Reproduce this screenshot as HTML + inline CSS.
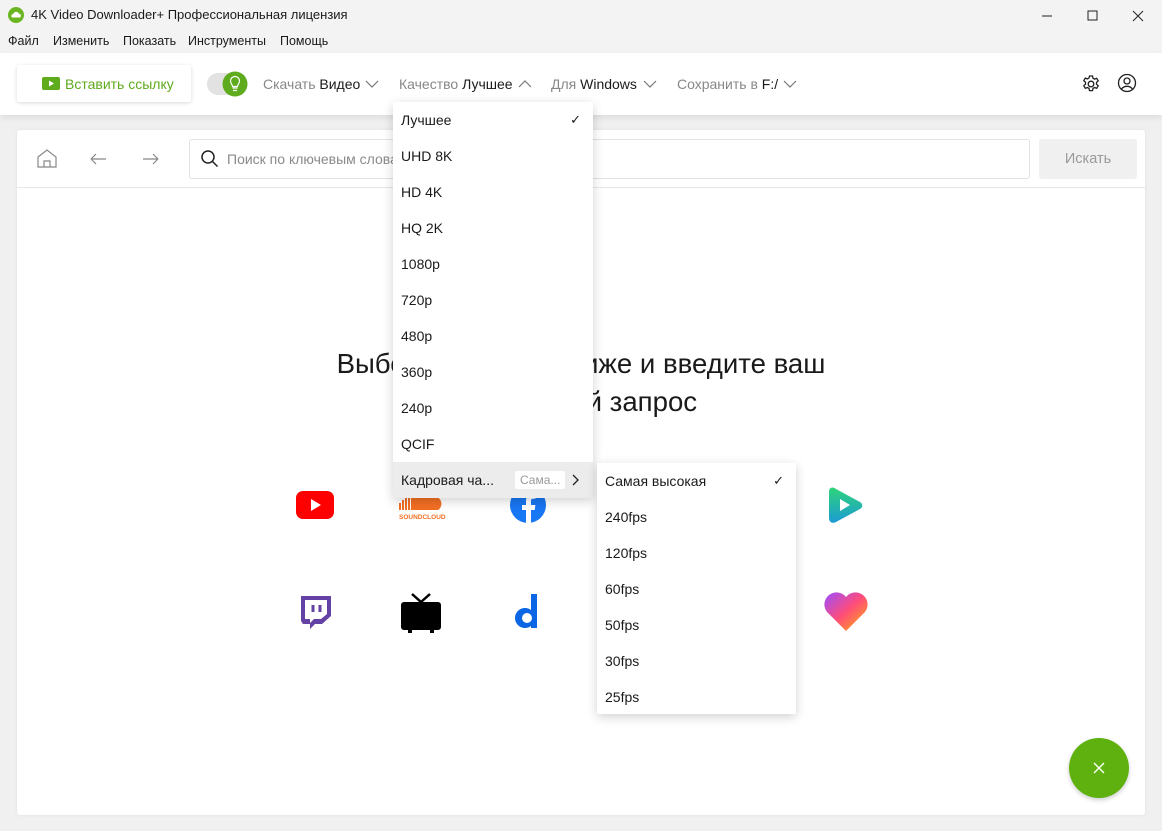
<!DOCTYPE html>
<html><head><meta charset="utf-8"><style>
*{margin:0;padding:0;box-sizing:border-box}
body{width:1162px;height:831px;overflow:hidden;background:#f0f0f0;font-family:"Segoe UI","Liberation Sans",sans-serif;position:relative;color:#1a1a1a}
.abs{position:absolute}
.title{left:0;top:0;width:1162px;height:31px;background:#f3f3f3;font-size:13px}
.menu{left:0;top:31px;width:1162px;height:22px;background:#f3f3f3;font-size:12.5px}
.menu span{position:absolute;top:3px}
.tool{left:0;top:53px;width:1162px;height:62px;background:#fff;box-shadow:0 3px 6px rgba(0,0,0,.08)}
.panel{left:17px;top:130px;width:1128px;height:685px;background:#fff;border-radius:3px;box-shadow:0 0 3px rgba(0,0,0,.08)}
.t{font-size:14px;color:#888;top:76px}
.t b{font-weight:normal;color:#1a1a1a}
.dd{background:#fff;box-shadow:0 3px 10px rgba(0,0,0,.18);font-size:14px}
.dd div{height:36px;line-height:36px;padding-left:8px;position:relative}
.chk{position:absolute;right:12px;top:0;font-size:13px}
h1{font-weight:normal;font-size:27.6px;text-align:center;position:absolute;left:0;width:1162px;line-height:38px}
</style></head><body>
<div class="abs title">
 <svg class="abs" style="left:8px;top:7px" width="16" height="16"><circle cx="8" cy="8" r="8" fill="#6bb522"/><path d="M4 10.5h8a2 2 0 0 0-1-3.7A3 3 0 0 0 5.3 7 2 2 0 0 0 4 10.5z" fill="#fff"/></svg>
 <span class="abs" style="left:31px;top:7px">4K Video Downloader+ Профессиональная лицензия</span>
 <svg class="abs" style="left:1040px;top:8px" width="110" height="16" fill="none" stroke="#222" stroke-width="1"><path d="M2 8h10"/><rect x="48" y="3" width="9" height="9"/><path d="M93 3l10 10M103 3l-10 10"/></svg>
</div>
<div class="abs menu"><span style="left:8px">Файл</span><span style="left:53px">Изменить</span><span style="left:123px">Показать</span><span style="left:188px">Инструменты</span><span style="left:280px">Помощь</span></div>
<div class="abs tool"></div>
<div class="abs" style="left:17px;top:65px;width:174px;height:37px;background:#fff;box-shadow:0 1px 4px rgba(0,0,0,.15);border-radius:2px"></div>
<svg class="abs" style="left:42px;top:77px" width="18" height="13"><rect width="18" height="13" rx="2" fill="#5fab1e"/><path d="M7 3.5l5 3-5 3z" fill="#fff"/></svg>
<span class="abs" style="left:65px;top:76px;font-size:14px;color:#5fab1e">Вставить ссылку</span>
<div class="abs" style="left:207px;top:73px;width:38px;height:22px;border-radius:11px;background:#e2e2e2"></div>
<svg class="abs" style="left:222px;top:71px" width="26" height="26"><circle cx="13" cy="13" r="12.5" fill="#5fab1e"/><path d="M10.5 17h5M11 19.5h4M10.5 15.5c0-2-2-3-2-5.5a4.5 4.5 0 0 1 9 0c0 2.5-2 3.5-2 5.5z" stroke="#fff" fill="none" stroke-width="1.2"/></svg>
<span class="abs t" style="left:263px">Скачать <b>Видео</b></span>
<span class="abs t" style="left:399px">Качество <b>Лучшее</b></span>
<span class="abs t" style="left:551px">Для <b>Windows</b></span>
<span class="abs t" style="left:677px">Сохранить в <b>F:/</b></span>
<svg class="abs" style="left:0;top:77px" width="800" height="14" fill="none" stroke="#777" stroke-width="1.2"><path d="M366 4l6 6 6-6"/><path d="M519 10l6-6 6 6"/><path d="M644 4l6 6 6-6"/><path d="M784 4l6 6 6-6"/></svg>
<svg class="abs" style="left:1081px;top:74px" width="20" height="20" fill="none" stroke="#222" stroke-width="1.3"><circle cx="10" cy="10" r="2.8"/><path d="M8.5 2h3l.5 2.2 1.6.9 2.1-.8 1.5 2.6-1.7 1.5v1.8l1.7 1.5-1.5 2.6-2.1-.8-1.6.9-.5 2.2h-3l-.5-2.2-1.6-.9-2.1.8-1.5-2.6 1.7-1.5V8.2L2.8 6.7l1.5-2.6 2.1.8 1.6-.9z"/></svg>
<svg class="abs" style="left:1117px;top:73px" width="20" height="20" fill="none" stroke="#222" stroke-width="1.3"><circle cx="10" cy="10" r="8.5"/><circle cx="10" cy="8" r="3"/><path d="M4.5 16a7 7 0 0 1 11 0"/></svg>
<div class="abs panel"></div>
<div class="abs" style="left:17px;top:187px;width:1128px;height:1px;background:#e6e6e6"></div>
<svg class="abs" style="left:36px;top:148px" width="135" height="22" fill="none" stroke="#888" stroke-width="1.2"><path d="M2 9l9-7 9 7v10H2z"/><path d="M8 19v-6h6v6"/><path d="M55 11h15M55 11l5-5M55 11l5 5"/><path d="M107 11h15M122 11l-5-5M122 11l-5 5"/></svg>
<div class="abs" style="left:189px;top:139px;width:841px;height:40px;border:1px solid #e2e2e2;border-radius:3px;background:#fff"></div>
<svg class="abs" style="left:200px;top:149px" width="20" height="20" fill="none" stroke="#222" stroke-width="1.5"><circle cx="8" cy="8" r="6"/><path d="M12.5 12.5l5 5"/></svg>
<span class="abs" style="left:227px;top:151px;font-size:14px;color:#8a8a8a">Поиск по ключевым слова</span>
<div class="abs" style="left:1039px;top:139px;width:98px;height:40px;background:#f0f0f0;border-radius:3px;font-size:14.5px;color:#999;text-align:center;line-height:40px">Искать</div>
<h1 style="top:345px">Выберите сервис ниже и введите ваш<br>поисковый запрос</h1>
<svg class="abs" style="left:296px;top:491px" width="38" height="28"><rect width="38" height="28" rx="7" fill="#f00"/><path d="M15 8l10 6-10 6z" fill="#fff"/></svg>
<svg class="abs" style="left:398px;top:488px" width="48" height="32"><path d="M2 22v-7M5 22v-10M8 22v-12M11 22v-14" stroke="#f26f23" stroke-width="2"/><path d="M13 22V6a10 10 0 0 1 19 3.5A6.3 6.3 0 1 1 40 22z" fill="#f26f23"/><text x="1" y="31" font-size="6.5" fill="#f26f23" font-family="Liberation Sans" font-weight="bold">SOUNDCLOUD</text></svg>
<svg class="abs" style="left:509px;top:486px" width="38" height="38"><circle cx="19" cy="19" r="18" fill="#1877f2"/><path d="M17 38V24h-4v-5h4v-4c0-4 2.4-6.5 6.4-6.5 1.5 0 3 .2 3 .2v4h-2.2c-2 0-2.2 1.2-2.2 2.4V19h4.4l-.7 5H22v14z" fill="#fff"/></svg>
<svg class="abs" style="left:826px;top:486px" width="38" height="38"><defs><linearGradient id="g" x1="0" y1="0" x2="0" y2="1"><stop offset="0" stop-color="#2ed47a"/><stop offset="1" stop-color="#1c9bd4"/></linearGradient></defs><path d="M3 6c0-4 3-6 7-3l24 13c3 2 3 5 0 7L10 36c-4 2-7 0-7-4z" fill="url(#g)"/><path d="M14 13l10 6-10 6z" fill="#fff"/></svg>
<svg class="abs" style="left:298px;top:594px" width="36" height="36"><path d="M3 2h30v20l-9 8h-7l-5 5v-5H5l-2-3z" fill="#6441a5"/><path d="M7 6h22v14l-6 5h-7l-4 4v-4H7z" fill="#fff"/><path d="M15 11v7M22 11v7" stroke="#6441a5" stroke-width="3"/></svg>
<svg class="abs" style="left:400px;top:592px" width="42" height="42"><path d="M12 2l9 8 9-8" stroke="#000" stroke-width="2.5" fill="none"/><rect x="1" y="10" width="40" height="28" rx="3" fill="#000"/><rect x="8" y="37" width="4" height="4" fill="#000"/><rect x="30" y="37" width="4" height="4" fill="#000"/></svg>
<svg class="abs" style="left:513px;top:594px" width="30" height="36"><path d="M18 0h6v34h-6v-2a10 10 0 1 1 0-16z" fill="#0a66e4"/><circle cx="14" cy="24" r="5" fill="#fff"/></svg>
<svg class="abs" style="left:823px;top:590px" width="46" height="42"><defs><linearGradient id="h" x1="0" y1="0" x2="1" y2="1"><stop offset="0" stop-color="#9b4dff"/><stop offset=".5" stop-color="#ff4d7a"/><stop offset="1" stop-color="#ffb400"/></linearGradient></defs><path d="M23 41L4 22A11 11 0 0 1 23 7a11 11 0 0 1 19 15z" fill="url(#h)"/></svg>
<div class="abs dd" style="left:393px;top:102px;width:200px;height:396px">
 <div>Лучшее<span class="chk">✓</span></div><div>UHD 8K</div><div>HD 4K</div><div>HQ 2K</div><div>1080p</div><div>720p</div><div>480p</div><div>360p</div><div>240p</div><div>QCIF</div>
 <div style="background:#ececec">Кадровая ча...<span style="position:absolute;left:122px;top:9px;height:18px;line-height:18px;background:#fff;font-size:12px;color:#999;padding:0 5px;border-radius:2px">Сама...</span><svg style="position:absolute;right:14px;top:12px" width="8" height="12" fill="none" stroke="#222" stroke-width="1.3"><path d="M2 1l5 5-5 5"/></svg></div>
</div>
<div class="abs dd" style="left:597px;top:463px;width:199px;height:251px">
 <div>Самая высокая<span class="chk">✓</span></div><div>240fps</div><div>120fps</div><div>60fps</div><div>50fps</div><div>30fps</div><div>25fps</div>
</div>
<div class="abs" style="left:1069px;top:738px;width:60px;height:60px;border-radius:50%;background:#5fb10f;box-shadow:0 2px 5px rgba(0,0,0,.2)"></div>
<svg class="abs" style="left:1093px;top:762px" width="12" height="12" stroke="#fff" stroke-width="1.4"><path d="M1 1l10 10M11 1L1 11"/></svg>
</body></html>
